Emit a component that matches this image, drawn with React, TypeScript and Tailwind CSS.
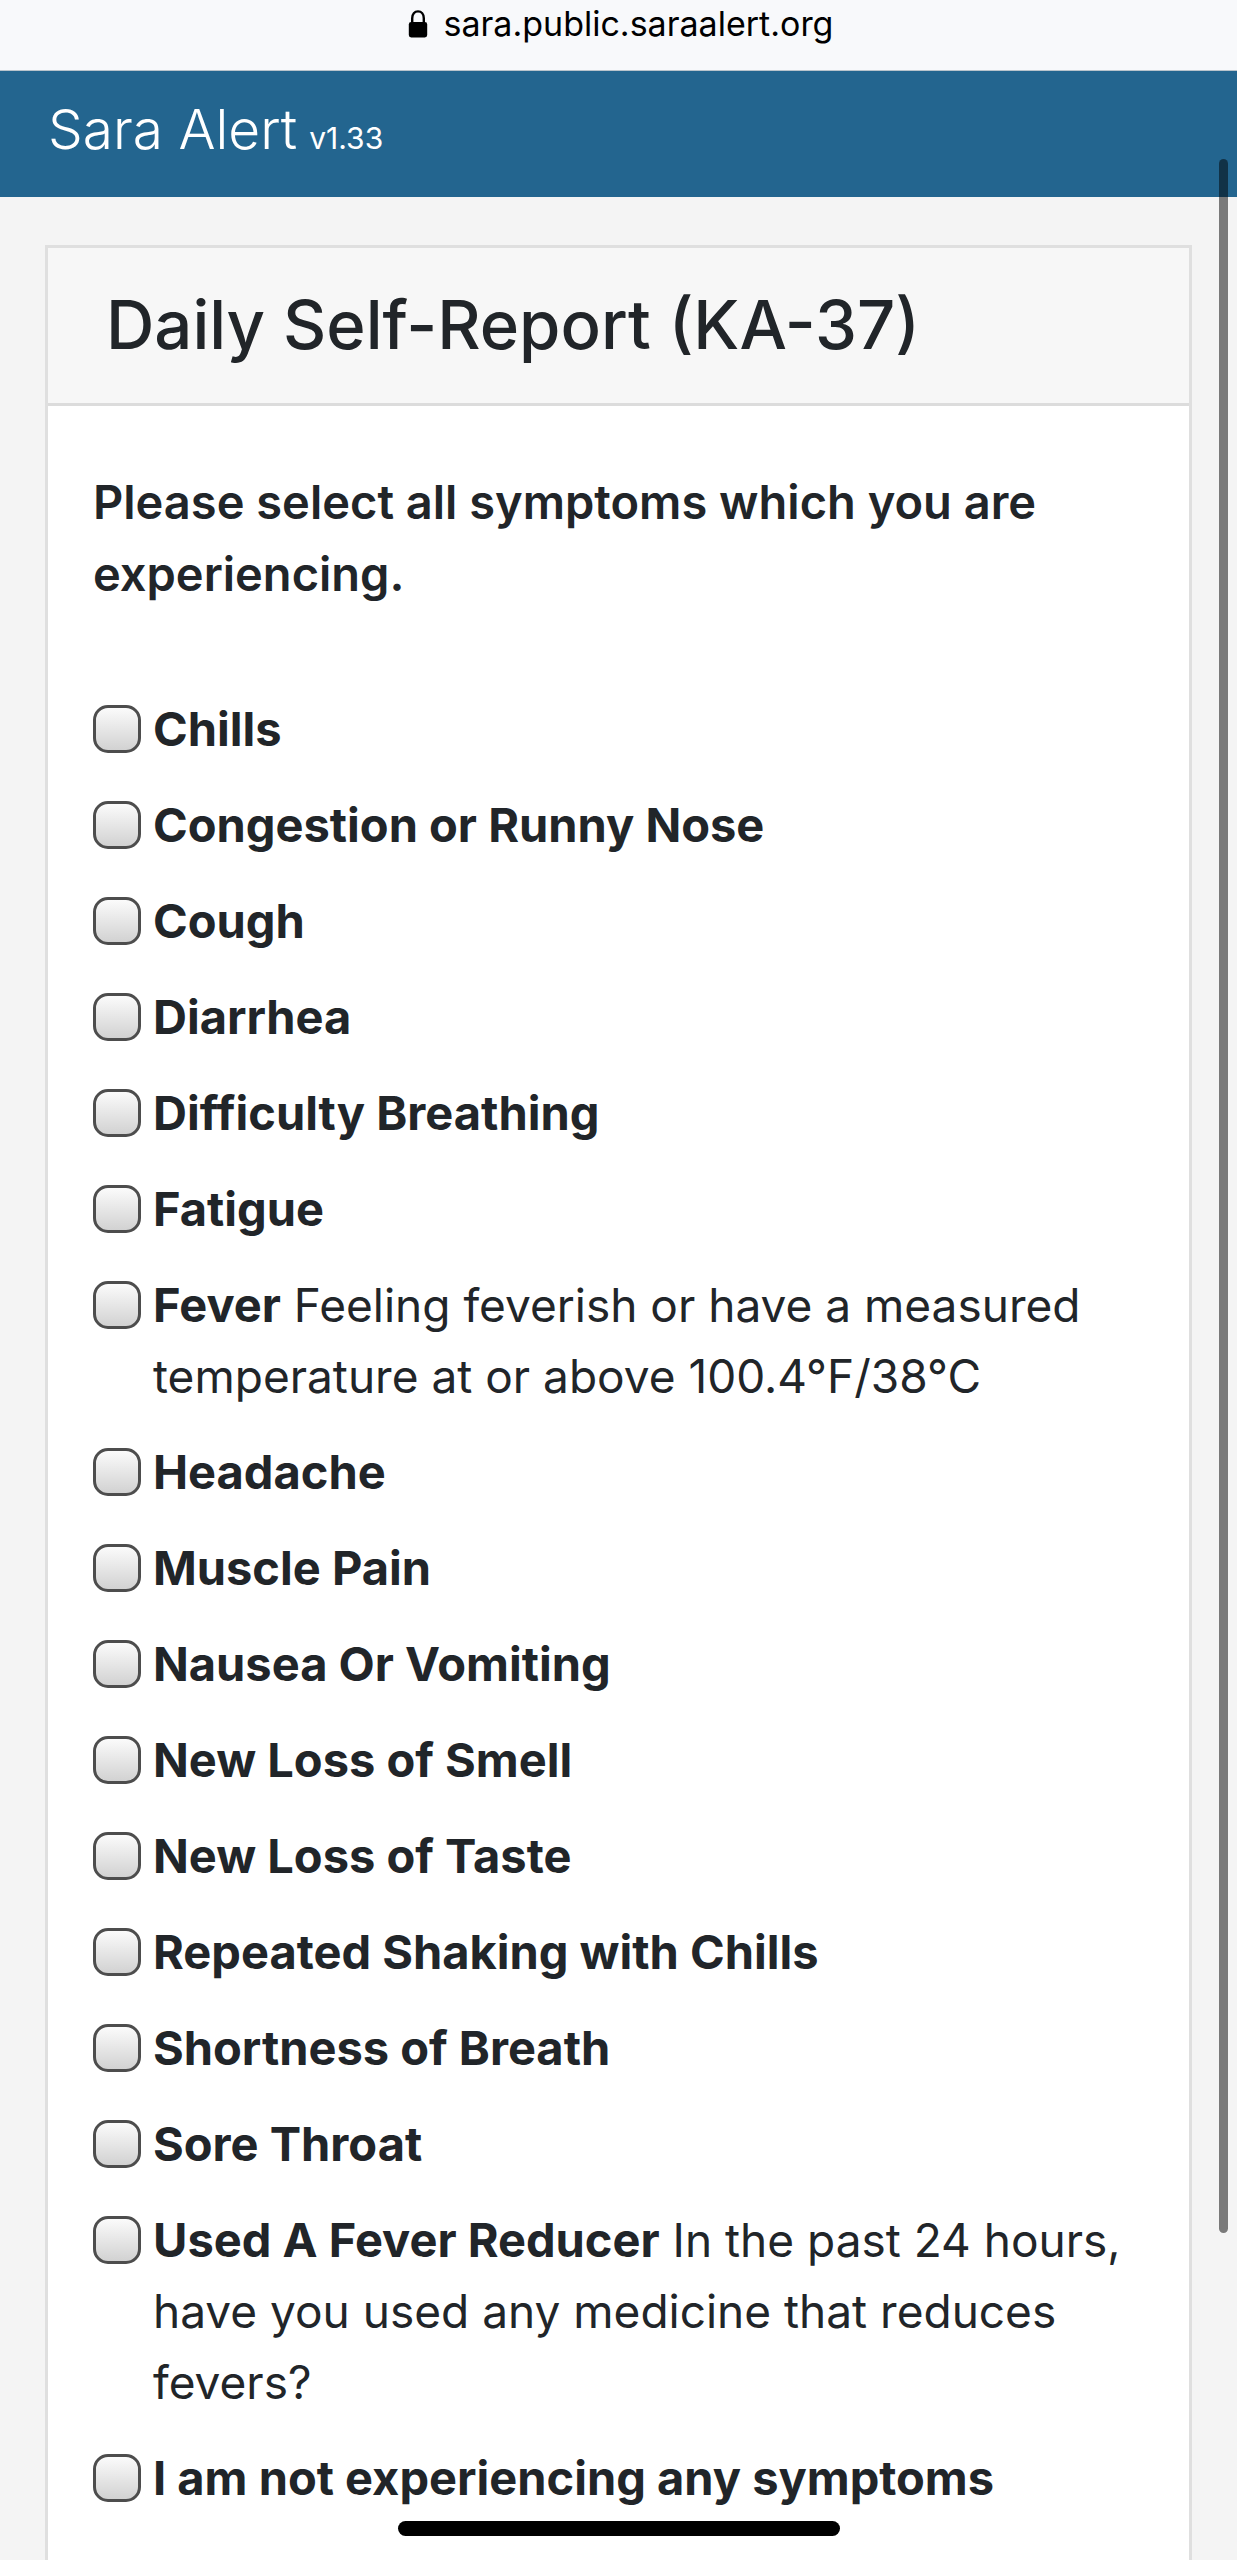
type Symptom = { id: string; name: string; note?: string };

const symptoms: Symptom[] = [
  { id: "chills", name: "Chills" },
  { id: "congestion", name: "Congestion or Runny Nose" },
  { id: "cough", name: "Cough" },
  { id: "diarrhea", name: "Diarrhea" },
  { id: "difficulty-breathing", name: "Difficulty Breathing" },
  { id: "fatigue", name: "Fatigue" },
  {
    id: "fever",
    name: "Fever",
    note: "Feeling feverish or have a measured temperature at or above 100.4°F/38°C",
  },
  { id: "headache", name: "Headache" },
  { id: "muscle-pain", name: "Muscle Pain" },
  { id: "nausea", name: "Nausea Or Vomiting" },
  { id: "loss-of-smell", name: "New Loss of Smell" },
  { id: "loss-of-taste", name: "New Loss of Taste" },
  { id: "repeated-shaking", name: "Repeated Shaking with Chills" },
  { id: "shortness-of-breath", name: "Shortness of Breath" },
  { id: "sore-throat", name: "Sore Throat" },
  {
    id: "fever-reducer",
    name: "Used A Fever Reducer",
    note: "In the past 24 hours, have you used any medicine that reduces fevers?",
  },
  { id: "none", name: "I am not experiencing any symptoms" },
];

function LockIcon() {
  return (
    <svg viewBox="0 0 20 28" className="h-7 w-5" aria-hidden="true">
      <path
        d="M4.2 13V8.2C4.2 4 6.6 1.4 10 1.4S15.8 4 15.8 8.2V13"
        fill="none"
        stroke="currentColor"
        strokeWidth="2.4"
      />
      <rect x="0.8" y="12" width="18.4" height="15.4" rx="2.4" fill="currentColor" />
    </svg>
  );
}

function AddressBar() {
  return (
    <div className="flex h-[71px] items-start justify-center gap-4 border-b border-[#b9c4cc] bg-[#f8f9fb] pl-1 text-black">
      <div className="pt-[10px]">
        <LockIcon />
      </div>
      <span className="text-[34px] leading-[48px]">sara.public.saraalert.org</span>
    </div>
  );
}

function SymptomRow({ id, name, note }: Symptom) {
  return (
    <li className="flex items-start gap-3">
      <span className="flex h-[72px] shrink-0 items-center">
        <input
          type="checkbox"
          id={id}
          className="size-12 appearance-none rounded-[15px] border-3 border-[#4d4d4d] bg-linear-to-b from-[#fbfbfb] to-[#d2d2d2] checked:from-[#9ec5e8] checked:to-[#3b82c4]"
        />
      </span>
      <label htmlFor={id} className="text-[46px] leading-[71px]">
        <b className="text-[47px] font-bold">{name}</b>
        {note ? " " + note : null}
      </label>
    </li>
  );
}

export default function App() {
  return (
    <div className="flex min-h-screen flex-col bg-[#f4f4f4] font-['Inter',sans-serif] text-[#212529]">
      <AddressBar />
      <header className="flex h-[126px] items-baseline gap-3 bg-[#23658f] px-12 pt-[22px] text-white">
        <a href="#" className="text-[55px] leading-[72px] font-light">
          Sara Alert
        </a>
        <span className="text-[30px]">v1.33</span>
      </header>

      <main className="flex flex-1 flex-col px-[45px] pt-12">
        <section className="flex flex-1 flex-col border-3 border-b-0 border-[#dfdfdf] bg-white">
          <h1 className="border-b-3 border-[#dcdcdc] bg-[#f7f7f7] px-[58px] pt-[33px] pb-[35px] text-[67px] leading-[87px] font-medium">
            Daily Self-Report (KA-37)
          </h1>
          <form className="px-[45px] py-[60px]">
            <fieldset>
              <legend className="mb-[83px] text-[47px] leading-[72px] font-semibold">
                Please select all symptoms which you are experiencing.
              </legend>
              <ul className="flex flex-col gap-6">
                {symptoms.map((symptom) => (
                  <SymptomRow key={symptom.id} {...symptom} />
                ))}
              </ul>
            </fieldset>
          </form>
        </section>
      </main>

      <div className="pointer-events-none fixed top-[159px] right-[9px] h-[81%] w-[9px] rounded-full bg-black/50" />
      <div className="pointer-events-none fixed inset-x-0 bottom-6 flex justify-center">
        <div className="h-[15px] w-[442px] rounded-full bg-black" />
      </div>
    </div>
  );
}
